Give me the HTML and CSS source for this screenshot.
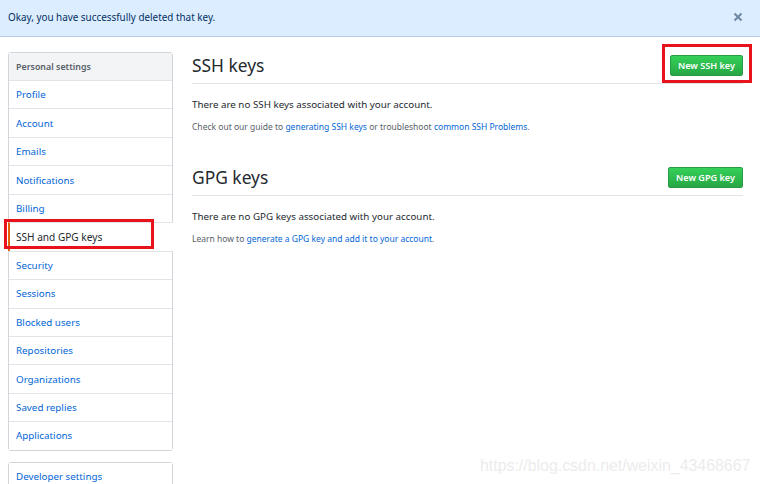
FILE: index.html
```html
<!DOCTYPE html>
<html lang="en">
<head>
    <meta charset="UTF-8">
    <title>SSH and GPG keys</title>
    <link rel="stylesheet" href="styles.css">
</head>
<body>
<div class="flash">
    <span>Okay, you have successfully deleted that key.</span>
    <svg class="flash-close" width="10" height="10" viewBox="0 0 10 10">
        <path d="M1.5 1.5 L8.5 8.5 M8.5 1.5 L1.5 8.5" stroke="#6f86a3" stroke-width="2"/>
    </svg>
</div>

<div class="page">
    <div class="side">
        <ul class="menu">
            <li class="menu-head">Personal settings</li>
            <li><a href="#">Profile</a></li>
            <li><a href="#">Account</a></li>
            <li><a href="#">Emails</a></li>
            <li><a href="#">Notifications</a></li>
            <li><a href="#">Billing</a></li>
            <li class="selected"><a href="#">SSH and GPG keys</a></li>
            <li><a href="#">Security</a></li>
            <li><a href="#">Sessions</a></li>
            <li><a href="#">Blocked users</a></li>
            <li><a href="#">Repositories</a></li>
            <li><a href="#">Organizations</a></li>
            <li><a href="#">Saved replies</a></li>
            <li><a href="#">Applications</a></li>
        </ul>
        <ul class="menu menu-dev">
            <li><a href="#">Developer settings</a></li>
        </ul>
    </div>

    <div class="main">
        <div class="sub-head">
            <h2>SSH keys</h2>
            <a class="btn" href="#">New SSH key</a>
        </div>
        <p class="blank">There are no SSH keys associated with your account.</p>
        <p class="note">Check out our guide to <a href="#">generating SSH keys</a> or troubleshoot <a href="#">common SSH Problems</a>.</p>

        <div class="sub-head sub-head-gpg">
            <h2>GPG keys</h2>
            <a class="btn" href="#">New GPG key</a>
        </div>
        <p class="blank">There are no GPG keys associated with your account.</p>
        <p class="note">Learn how to <a href="#">generate a GPG key and add it to your account</a>.</p>
    </div>
</div>

<!-- red marks drawn over the screenshot -->
<div class="mark mark-menu"></div>
<div class="mark mark-btn"></div>
<div class="watermark">https://blog.csdn.net/weixin_43468667</div>
</body>
</html>
```

FILE: styles.css
```css
* {
    margin: 0;
    padding: 0;
    list-style: none;
    box-sizing: border-box;
}

body {
    font-family: "Noto Sans", "Open Sans", sans-serif;
    color: #24292e;
    background: #fff;
    width: 760px;
    height: 484px;
    overflow: hidden;
    position: relative;
}

a {
    color: #0366d6;
    text-decoration: none;
}

.flash {
    height: 37px;
    background: #dbedff;
    border-bottom: 1px solid #b9d0e8;
    display: flex;
    align-items: center;
    justify-content: space-between;
    padding: 0 17px 3px 8px;
    font-size: 9.9px;
    color: #032f62;
}

.flash-close {
    margin-top: 1px;
}

.page {
    display: flex;
    padding: 15px 17px 0 8px;
    gap: 19px;
}

.side {
    width: 165px;
    flex: none;
}

.menu {
    border: 1px solid #d1d5da;
    border-radius: 3px;
    font-size: 9.8px;
}

.menu li {
    height: 28.45px;
    border-top: 1px solid #e1e4e8;
    display: flex;
    align-items: center;
    padding-left: 7px;
    background: #fff;
}

.menu li:first-child {
    border-top: 0;
}

.menu-head {
    background: #f3f4f6 !important;
    color: #586069;
    font-size: 8.9px;
    font-weight: 600;
    height: 27px !important;
}

.menu .selected {
    margin-left: -1px;
    margin-right: -1px;
    padding-left: 6px;
    border-left: 2px solid #e36209;
    font-size: 10.1px;
}

.menu .selected a {
    color: #24292e;
}

.menu-dev {
    margin-top: 11px;
}

.main {
    flex: 1;
}

.sub-head {
    display: flex;
    align-items: center;
    justify-content: space-between;
    border-bottom: 1px solid #e1e4e8;
    padding: 3px 0 7px;
}

.sub-head h2 {
    font-size: 17.4px;
    font-weight: 400;
    line-height: 21px;
}

.sub-head-gpg {
    margin-top: 30px;
}

.btn {
    display: block;
    height: 21px;
    line-height: 19px;
    padding: 0 7px;
    font-size: 9.1px;
    font-weight: 600;
    color: #fff;
    background: linear-gradient(#34d058, #28a745);
    border: 1px solid #2a9a45;
    border-radius: 2px;
}

.blank {
    font-size: 9.8px;
    margin-top: 13px;
    line-height: 16px;
}

.note {
    font-size: 8.5px;
    color: #586069;
    margin-top: 7px;
    line-height: 14px;
}

.mark {
    position: absolute;
    border: 3px solid #e8121c;
}

.mark-menu {
    left: 4px;
    top: 219px;
    width: 150px;
    height: 30px;
}

.mark-btn {
    left: 662px;
    top: 44px;
    width: 90px;
    height: 39px;
}

.watermark {
    position: absolute;
    left: 480px;
    top: 457px;
    font-family: "Liberation Sans", Arial, sans-serif;
    font-size: 15.9px;
    color: #ececec;
}
```
